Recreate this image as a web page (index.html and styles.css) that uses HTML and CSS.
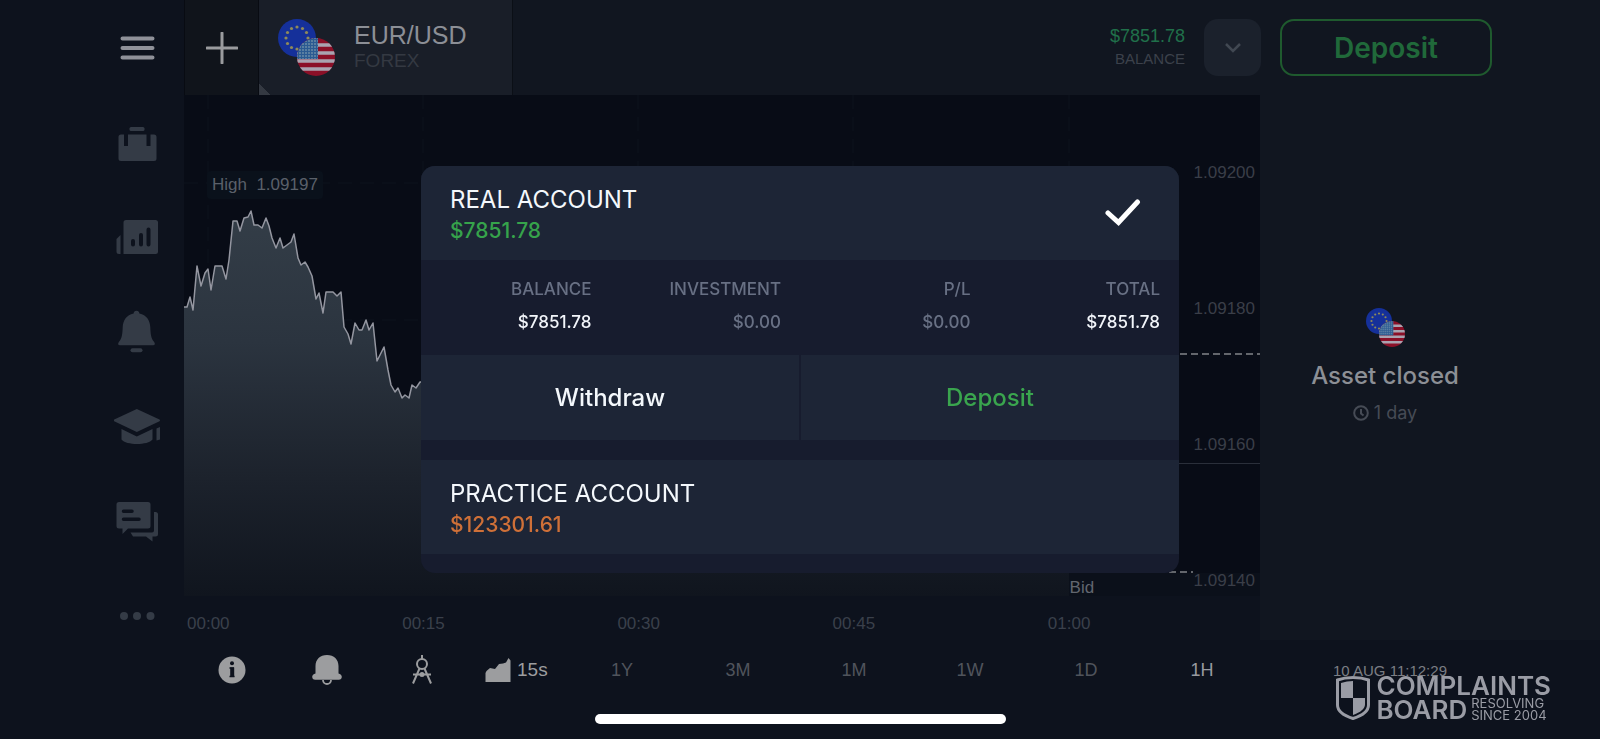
FILE: index.html
```html
<!DOCTYPE html>
<html lang="en">
<head>
    <meta charset="UTF-8">
    <meta name="viewport" content="width=device-width, initial-scale=1.0">
    <title>EUR/USD - Trade Room</title>
    <link rel="stylesheet" href="styles.css">
</head>
<body>
    <svg width="0" height="0" class="sprite" aria-hidden="true">
        <defs>
            <clipPath id="usClip"><circle cx="38" cy="38" r="19"/></clipPath>
            <pattern id="usStars" width="3" height="3" patternUnits="userSpaceOnUse">
                <rect width="3" height="3" fill="#2b5a92"/>
                <circle cx="1" cy="1" r="0.9" fill="#6f8fa8"/>
            </pattern>
        </defs>
        <symbol id="pairFlags" viewBox="0 0 57 57">
            <circle cx="19" cy="19" r="19" fill="#15309a"/>
            <g fill="#8f8a5a">
                <circle cx="19" cy="8" r="1.6"/><circle cx="24.5" cy="9.5" r="1.6"/>
                <circle cx="28.5" cy="13.5" r="1.6"/><circle cx="30" cy="19" r="1.6"/>
                <circle cx="28.5" cy="24.5" r="1.6"/><circle cx="24.5" cy="28.5" r="1.6"/>
                <circle cx="19" cy="30" r="1.6"/><circle cx="13.5" cy="28.5" r="1.6"/>
                <circle cx="9.5" cy="24.5" r="1.6"/><circle cx="8" cy="19" r="1.6"/>
                <circle cx="9.5" cy="13.5" r="1.6"/><circle cx="13.5" cy="9.5" r="1.6"/>
            </g>
            <g clip-path="url(#usClip)">
                <rect x="19" y="19" width="38" height="38" fill="#8b1028"/>
                <path d="M19 26h38M19 34h38M19 42h38M19 50h38" stroke="#a9a3b0" stroke-width="3.6"/>
                <rect x="19" y="19" width="21" height="21" fill="url(#usStars)"/>
            </g>
        </symbol>
    </svg>

    <div class="app">
        <nav class="sidebar" aria-label="Main menu">
            <button class="nav-button nav-menu" type="button" aria-label="Menu">
                <svg viewBox="0 0 46 46"><path d="M8.500 13.500h30M8.500 23h30M8.500 32.500h30" stroke="currentColor" stroke-width="4" stroke-linecap="round"/></svg>
            </button>
            <button class="nav-button" type="button" aria-label="Portfolio">
                <svg viewBox="0 0 46 46" fill="currentColor">
                    <rect x="15.500" y="7" width="15" height="4" rx="1.500"/>
                    <path d="M7 14.500h3V26h4V14.500h18.500V26h4V14.500H40a2.500 2.500 0 0 1 2.500 2.500v21.500a2.500 2.500 0 0 1-2.500 2.500H7a2.500 2.500 0 0 1-2.500-2.500V17A2.500 2.500 0 0 1 7 14.500z"/>
                </svg>
            </button>
            <button class="nav-button" type="button" aria-label="Market analysis">
                <svg viewBox="0 0 46 46">
                    <path fill="currentColor" d="M12 5h29.500a2.500 2.500 0 0 1 2.500 2.500v29A2.500 2.500 0 0 1 41.500 39H9.500V7.500A2.500 2.500 0 0 1 12 5zM6.500 20v19H5a2.500 2.500 0 0 1-2.500-2.500V24z"/>
                    <path d="M19 26v3.500M27 20v9.500M34.500 14.500v15" stroke="#0d121d" stroke-width="4" stroke-linecap="round"/>
                </svg>
            </button>
            <button class="nav-button" type="button" aria-label="Alerts">
                <svg viewBox="0 0 46 46" fill="currentColor">
                    <path d="M22.500 .8c1.700 0 2.700 1 2.900 2.700C32.500 5 36 10.300 36.300 17.300c.3 7 .7 11 3.700 14.500 1.500 2 1 3.500-1 3.500H6c-2 0-2.500-1.500-1-3.500C8 28.300 8.400 24.300 8.700 17.300 9 10.300 12.500 5 19.600 3.500c.2-1.700 1.200-2.700 2.900-2.700z"/>
                    <rect x="16.500" y="38.300" width="12" height="4" rx="2"/>
                </svg>
            </button>
            <button class="nav-button" type="button" aria-label="Education">
                <svg viewBox="0 0 46 46" fill="currentColor">
                    <path d="M22.800 4 45.500 14.500q1 .8 0 1.700L22.800 27 .2 16.200q-1-.9 0-1.700z"/>
                    <path d="M7.500 24l15.300 7.500L38.500 24v10.500C34 40.500 12 40.500 7.500 34.500zM42.500 23.500l3.500-1.500V34.500l-3.500 1z"/>
                </svg>
            </button>
            <button class="nav-button" type="button" aria-label="Chat">
                <svg viewBox="0 0 46 46">
                    <path fill="currentColor" d="M5 2h29a2.500 2.500 0 0 1 2.500 2.500V26a2.500 2.500 0 0 1-2.500 2.500H14L8.500 34v-5.500H5A2.500 2.500 0 0 1 2.500 26V4.500A2.500 2.500 0 0 1 5 2zM40 12h1.500a2.500 2.500 0 0 1 2.500 2.500V34a2.500 2.500 0 0 1-2.500 2.500h-3V41.500L32 36.500H19L16.500 32.500H38a2 2 0 0 0 2-2z"/>
                    <path d="M9.500 11.300H18M9.500 19.300H25" stroke="#0d121d" stroke-width="3.500" stroke-linecap="round"/>
                </svg>
            </button>
            <button class="nav-button" type="button" aria-label="More">
                <svg viewBox="0 0 46 46" fill="currentColor"><circle cx="10" cy="21" r="4"/><circle cx="23" cy="21" r="4"/><circle cx="36.500" cy="21" r="4"/></svg>
            </button>
        </nav>

        <main class="main">
            <header class="header">
                <button class="add-tab" type="button" aria-label="Add asset">
                    <svg width="32" height="32" viewBox="0 0 32 32"><path d="M16 1v30M1 16h30" stroke="currentColor" stroke-width="3" stroke-linecap="round"/></svg>
                </button>
                <button class="asset-tab" type="button">
                    <svg class="flags"><use href="#pairFlags"/></svg>
                    <span class="asset-text">
                        <span class="asset-name">EUR/USD</span>
                        <span class="asset-type">FOREX</span>
                    </span>
                </button>
                <div class="account">
                    <div class="balance">
                        <div class="balance-value">$7851.78</div>
                        <div class="balance-label">BALANCE</div>
                    </div>
                    <button class="account-toggle" type="button" aria-label="Choose account">
                        <svg width="18" height="12" viewBox="0 0 18 12"><path d="M2 2l7 7 7-7" fill="none" stroke="currentColor" stroke-width="2.500"/></svg>
                    </button>
                    <button class="deposit" type="button">Deposit</button>
                </div>
            </header>

            <div class="workspace">
                <section class="chart" aria-label="Price chart">
                    <div class="plot">
                        <svg class="plot-lines" viewBox="0 0 1076 501" preserveAspectRatio="none">
                            <defs>
                                <linearGradient id="areaFill" gradientUnits="userSpaceOnUse" x1="0" y1="110" x2="0" y2="501">
                                    <stop offset="0" stop-color="#343e48"/>
                                    <stop offset="0.350" stop-color="#2b343f"/>
                                    <stop offset="0.700" stop-color="#1c222c"/>
                                    <stop offset="1" stop-color="#10151e"/>
                                </linearGradient>
                            </defs>
                            <path class="grid-line" d="M24 0V501M239 0V501M454 0V501M669 0V501M885 0V501M0 88H995M0 225H995M0 361H995"/>
                            <path fill="url(#areaFill)" d="M0 212L3 212 6 202 9 215 13 171 17 191 21 178 24 174 27 195 31 171 38 171 42 184 45 165 49 126 53 126 56 136 60 123 64 122 67 116 70 130 74 130 78 133 82 123 85 131 88 143 92 153 96 143 99 153 107 147 110 139 114 163 117 170 121 167 124 172 128 181 132 204 135 198 139 218 142 197 149 197 153 201 157 197 160 232 164 239 167 249 171 228 175 235 178 235 182 225 185 235 189 228 193 266 200 252 204 275 207 290 211 297 214 293 218 303 221 300 225 303 228 290 232 293 236 287 885 350 885 501 0 501z"/>
                            <path class="price-line" d="M0 212L3 212 6 202 9 215 13 171 17 191 21 178 24 174 27 195 31 171 38 171 42 184 45 165 49 126 53 126 56 136 60 123 64 122 67 116 70 130 74 130 78 133 82 123 85 131 88 143 92 153 96 143 99 153 107 147 110 139 114 163 117 170 121 167 124 172 128 181 132 204 135 198 139 218 142 197 149 197 153 201 157 197 160 232 164 239 167 249 171 228 175 235 178 235 182 225 185 235 189 228 193 266 200 252 204 275 207 290 211 297 214 293 218 303 221 300 225 303 228 290 232 293 236 287 240 287"/>
                            <rect x="885" y="478" width="191" height="23" fill="#0b101a"/>
                            <path class="level-dashed" d="M985 259H1076M985 477H1009"/>
                            <path class="level" d="M985 368.500H1076"/>
                        </svg>
                        <div class="high-label">High&nbsp; 1.09197</div>
                        <div class="bid-label">Bid</div>
                        <div class="price-axis">
                            <span>1.09200</span>
                            <span>1.09180</span>
                            <span>1.09160</span>
                            <span>1.09140</span>
                        </div>
                    </div>
                    <div class="time-axis">
                        <span>00:00</span>
                        <span>00:15</span>
                        <span>00:30</span>
                        <span>00:45</span>
                        <span>01:00</span>
                    </div>
                </section>

                <aside class="asset-status">
                    <svg class="flags flags-small"><use href="#pairFlags"/></svg>
                    <div class="status-title">Asset closed</div>
                    <div class="status-time">
                        <svg width="16" height="16" viewBox="0 0 16 16" fill="none" stroke="currentColor" stroke-width="2"><circle cx="8" cy="8" r="6.800"/><path d="M8 4v4.500l2.500 2"/></svg>
                        <span>1 day</span>
                    </div>
                </aside>
            </div>

            <footer class="toolbar">
                <button class="tool" type="button" aria-label="Info">
                    <svg width="28" height="28" viewBox="0 0 28 28"><circle cx="14" cy="14" r="13.500" fill="currentColor"/><circle cx="14" cy="7.300" r="2" fill="#0d121d"/><path d="M11.500 12h4.500M11.500 20.500h5" stroke="#0d121d" stroke-width="1.500"/><path d="M14.200 11.500v9.500" stroke="#0d121d" stroke-width="4"/></svg>
                </button>
                <button class="tool" type="button" aria-label="Price alerts">
                    <svg width="30" height="30" viewBox="0 0 30 30"><path d="M11 25a4 4 0 0 0 8 0" fill="none" stroke="currentColor" stroke-width="1.800"/><path fill="currentColor" d="M15 0c7 0 11.500 4.500 11.500 11v7.500c2 .5 3.300 1.700 3.300 3.200 0 1.700-1.200 3-3 3H3.200c-1.800 0-3-1.300-3-3 0-1.500 1.300-2.700 3.300-3.200V11C3.500 4.500 8 0 15 0z"/></svg>
                </button>
                <button class="tool" type="button" aria-label="Drawing tools">
                    <svg width="20" height="30" viewBox="0 0 20 30" fill="none" stroke="currentColor" stroke-width="2"><path d="M10 0v4"/><circle cx="10" cy="9" r="5"/><path d="M7.500 13.500L1 28.500M12.500 13.500L19 28.500M1 19.500h18"/><circle cx="10" cy="19.500" r="1.500"/></svg>
                </button>
                <button class="chart-type" type="button">
                    <svg width="26" height="24" viewBox="0 0 26 24"><path fill="currentColor" d="M.5 24V15l1-2 3.500-3 5 1 4-5 4-.5 3-1L23.500 0l2 2.500V24z"/></svg>
                    <span>15s</span>
                </button>
                <div class="ranges">
                    <button class="range" type="button">1Y</button>
                    <button class="range" type="button">3M</button>
                    <button class="range" type="button">1M</button>
                    <button class="range" type="button">1W</button>
                    <button class="range" type="button">1D</button>
                    <button class="range active" type="button">1H</button>
                </div>
                <time class="clock">10 AUG 11:12:29</time>
            </footer>
        </main>
    </div>

    <!-- Account picker -->
    <div class="overlay">
        <div class="modal" role="dialog" aria-label="Accounts">
            <div class="account-row">
                <div>
                    <div class="account-name">REAL ACCOUNT</div>
                    <div class="account-amount real">$7851.78</div>
                </div>
                <svg class="check" width="36" height="28" viewBox="0 0 36 28"><path d="M3 14l10.500 9.500L32.500 3" fill="none" stroke="#fff" stroke-width="5" stroke-linecap="round"/></svg>
            </div>
            <table class="summary">
                <thead>
                    <tr><th>BALANCE</th><th>INVESTMENT</th><th>P/L</th><th>TOTAL</th></tr>
                </thead>
                <tbody>
                    <tr><td class="strong">$7851.78</td><td>$0.00</td><td>$0.00</td><td class="strong">$7851.78</td></tr>
                </tbody>
            </table>
            <div class="modal-actions">
                <button class="modal-button" type="button">Withdraw</button>
                <button class="modal-button green" type="button">Deposit</button>
            </div>
            <div class="account-row">
                <div>
                    <div class="account-name">PRACTICE ACCOUNT</div>
                    <div class="account-amount practice">$123301.61</div>
                </div>
            </div>
        </div>
    </div>

    <div class="watermark">
        <svg width="34" height="44" viewBox="0 0 34 44">
            <path d="M17 1.500c6 0 11 .8 15.500 2.500V29c0 6-6 10.500-15.500 13.500C7.500 39.500 1.500 35 1.500 29V4C6 2.300 11 1.500 17 1.500z" fill="none" stroke="currentColor" stroke-width="3"/>
            <path fill="currentColor" d="M17 5v17H5V7c4-1.300 8-2 12-2zM17 22h12v6.500c0 4-4.500 8-12 10.500z"/>
        </svg>
        <div>
            <div class="watermark-top">COMPLAINTS</div>
            <div class="watermark-bottom">
                <span class="watermark-board">BOARD</span>
                <span class="watermark-tag">RESOLVING<br>SINCE 2004</span>
            </div>
        </div>
    </div>
    <div class="home-bar"></div>
</body>
</html>
```

FILE: styles.css
```css
* {
    box-sizing: border-box;
}
body {
    margin: 0;
    background: #0d121d;
    color: #8f9299;
    font-family: "Liberation Sans", Arial, sans-serif;
    font-size: 17px;
}
button {
    margin: 0;
    padding: 0;
    border: none;
    background: none;
    color: inherit;
    font: inherit;
    cursor: pointer;
}
svg {
    display: block;
}
.sprite {
    position: absolute;
}
.app {
    display: flex;
    min-height: 100vh;
}

/* Sidebar */
.sidebar {
    flex: none;
    width: 184px;
    padding-left: 89px;
    background: #0d121d;
    color: #343b46;
}
.nav-button {
    display: flex;
    align-items: center;
    justify-content: center;
    width: 95px;
    height: 95px;
}
.nav-button svg {
    width: 46px;
    height: 46px;
}
.nav-menu {
    color: #8f9199;
}

/* Header */
.main {
    flex: 1;
    display: flex;
    flex-direction: column;
    min-width: 0;
}
.header {
    display: flex;
    height: 95px;
    background: #111620;
}
.add-tab {
    display: flex;
    align-items: center;
    justify-content: center;
    width: 75px;
    background: #10141b;
    border-left: 1px solid #080b12;
    border-right: 1px solid #080b12;
    color: #9a9b9e;
}
.asset-tab {
    display: flex;
    align-items: center;
    gap: 19px;
    width: 254px;
    padding-left: 19px;
    background: linear-gradient(45deg, #343942 8px, #191e28 8px);
    border-right: 1px solid #0b0f16;
    text-align: left;
}
.flags {
    width: 57px;
    height: 57px;
}
.asset-text {
    display: flex;
    flex-direction: column;
}
.asset-name {
    font-size: 25px;
    line-height: 26px;
    color: #8c8f96;
}
.asset-type {
    font-size: 19px;
    line-height: 26px;
    color: #343942;
}
.account {
    display: flex;
    align-items: center;
    gap: 19px;
    margin-left: auto;
    padding-right: 108px;
}
.balance {
    text-align: right;
}
.balance-value {
    font-size: 18px;
    line-height: 22px;
    color: #20704a;
}
.balance-label {
    font-size: 15px;
    line-height: 24px;
    color: #3c414b;
}
.account-toggle {
    display: flex;
    align-items: center;
    justify-content: center;
    width: 57px;
    height: 57px;
    border-radius: 14px;
    background: #1b212c;
    color: #414852;
}
.deposit {
    width: 212px;
    height: 57px;
    border: 2px solid #1f5a2e;
    border-radius: 14px;
    font-family: Inter, sans-serif;
    font-size: 28px;
    font-weight: 600;
    color: #20693a;
}

/* Chart */
.workspace {
    flex: 1;
    display: flex;
}
.chart {
    flex: 1;
    display: flex;
    flex-direction: column;
    background: #080c16;
}
.plot {
    position: relative;
    flex: 1;
    display: flex;
    justify-content: flex-end;
}
.plot-lines {
    position: absolute;
    width: 100%;
    height: 100%;
}
.grid-line {
    stroke: #0d121c;
    stroke-dasharray: 14 8;
}
.price-line {
    fill: none;
    stroke: #9496a0;
    stroke-width: 1.5;
    stroke-linejoin: round;
}
.level {
    stroke: #2a2f3a;
}
.level-dashed {
    stroke: #63666c;
    stroke-width: 2;
    stroke-dasharray: 7 4;
}
.high-label {
    position: absolute;
    top: 76px;
    left: 23px;
    padding: 0 5px;
    border-radius: 4px;
    background: #0a111b;
    color: #5a606a;
    line-height: 28px;
}
.bid-label {
    position: absolute;
    bottom: 0;
    left: 82.3%;
    color: #62666f;
    line-height: 16px;
}
.price-axis {
    position: relative;
    display: flex;
    flex-direction: column;
    gap: 116px;
    padding: 68px 5px 0 0;
    color: #3a3e48;
    line-height: 20px;
}
.time-axis {
    display: grid;
    grid-template-columns: repeat(5, 1fr);
    height: 44px;
    padding-top: 18px;
    background: #0d121d;
    color: #3a404b;
    line-height: 20px;
    text-indent: 3px;
}

/* Asset status */
.asset-status {
    flex: none;
    display: flex;
    flex-direction: column;
    align-items: center;
    justify-content: center;
    width: 340px;
    padding-right: 90px;
    padding-bottom: 4px;
    background: #111620;
    font-family: Inter, sans-serif;
}
.flags-small {
    width: 39px;
    height: 39px;
}
.status-title {
    margin-top: 14px;
    font-size: 24px;
    font-weight: 500;
    line-height: 30px;
    color: #8c8f95;
}
.status-time {
    display: flex;
    align-items: center;
    gap: 5px;
    margin-top: 11px;
    font-size: 18px;
    line-height: 22px;
    color: #464b55;
}

/* Toolbar */
.toolbar {
    display: flex;
    align-items: center;
    height: 99px;
    padding-bottom: 39px;
    background: #0d121d;
}
.tool {
    display: flex;
    align-items: center;
    justify-content: center;
    width: 95px;
    height: 60px;
    color: #9c9d9f;
}
.chart-type {
    display: flex;
    align-items: center;
    gap: 6px;
    width: 95px;
    height: 60px;
    padding-left: 16px;
    color: #9c9d9f;
    font-size: 19px;
}
.ranges {
    flex: 1;
    display: flex;
}
.range {
    flex: 1;
    height: 60px;
    font-size: 18px;
    color: #50545c;
}
.range.active {
    color: #989aa0;
}
.clock {
    width: 340px;
    padding-right: 80px;
    text-align: center;
    font-size: 15px;
    color: #7b7e84;
}

/* Account picker */
.overlay {
    position: fixed;
    inset: 0;
    display: flex;
    align-items: center;
    justify-content: center;
}
.modal {
    width: 758px;
    max-width: 90%;
    padding-bottom: 19px;
    border-radius: 14px;
    overflow: hidden;
    background: #171c2e;
    font-family: Inter, sans-serif;
}
.account-row {
    display: flex;
    justify-content: space-between;
    height: 94px;
    padding: 18px 38px 0 29px;
    background: #1d2536;
}
.account-name {
    font-size: 24px;
    line-height: 32px;
    color: #f4f8fc;
}
.account-amount {
    font-size: 21px;
    font-weight: 500;
    line-height: 30px;
}
.real {
    color: #36a34b;
}
.practice {
    color: #cf7038;
}
.check {
    margin-top: 15px;
}
.summary {
    width: 100%;
    height: 95px;
    padding: 18px 0 12px;
    border-spacing: 0;
    table-layout: fixed;
    text-align: right;
    font-size: 17px;
    line-height: 22px;
    color: #687084;
}
.summary th,
.summary td {
    padding: 0 19px 0 0;
    font-weight: 500;
}
.summary .strong {
    color: #f2f5fa;
}
.modal-actions {
    display: flex;
    gap: 2px;
    margin-bottom: 20px;
}
.modal-button {
    flex: 1;
    height: 85px;
    background: #1d2536;
    color: #f4f8fc;
    font-size: 24px;
    font-weight: 500;
}
.modal-button.green {
    color: #3aa54e;
}

.watermark {
    position: absolute;
    right: 49px;
    bottom: 18px;
    display: flex;
    align-items: center;
    gap: 6px;
    color: #9a9ca5;
    font-family: Inter, sans-serif;
}
.watermark-top,
.watermark-board {
    font-size: 26px;
    font-weight: 600;
    line-height: 23px;
}
.watermark-bottom {
    display: flex;
    align-items: center;
    gap: 4px;
}
.watermark-tag {
    font-size: 13px;
    line-height: 12px;
}
.home-bar {
    position: absolute;
    bottom: 15px;
    left: 50%;
    width: 411px;
    height: 10px;
    margin-left: -205px;
    border-radius: 5px;
    background: #fff;
}
```
